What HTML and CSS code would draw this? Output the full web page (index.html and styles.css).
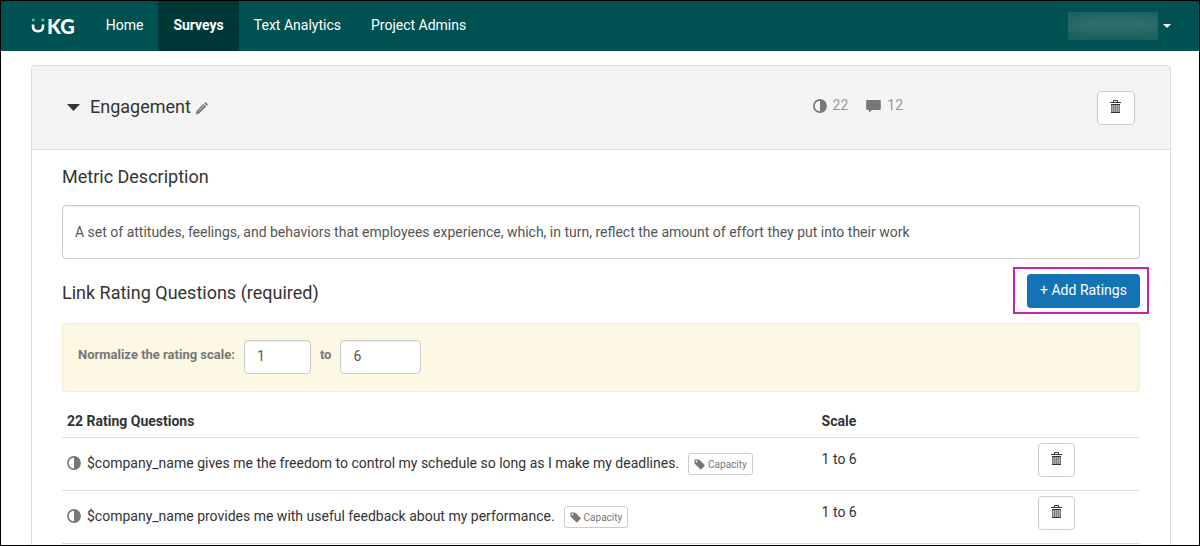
FILE: index.html
```html
<!DOCTYPE html>
<html lang="en">
<head>
<meta charset="utf-8">
<meta name="viewport" content="width=device-width, initial-scale=1">
<title>Surveys</title>
<link rel="stylesheet" href="styles.css">
</head>
<body>
<svg class="sprite" aria-hidden="true">
  <symbol id="contrast" viewBox="0 0 14 14"><circle cx="7" cy="7" r="6.1" fill="none" stroke="currentColor" stroke-width="1.6"/><path d="M7 1a6 6 0 0 1 0 12z" fill="currentColor"/></symbol>
  <symbol id="comment" viewBox="0 0 15 14"><path d="M1.200 1h12.600a1 1 0 0 1 1 1v8a1 1 0 0 1-1 1H6L3 13.800V11H1.200a1 1 0 0 1-1-1V2a1 1 0 0 1 1-1z" fill="currentColor"/></symbol>
  <symbol id="pencil" viewBox="0 0 13 13"><path d="M.5 12.500l1.300-4L8.500 1.900l2.600 2.600-6.700 6.700zM9.200 1.300l.8-.8q.5-.4 1 0l1.600 1.600q.4.500 0 1l-.8.8z" fill="currentColor"/><path d="M3 9.700l6-6" stroke="#f4f4f4" stroke-width=".6"/></symbol>
  <symbol id="trash" viewBox="0 0 13 14"><path d="M4.500 2.500V.5h4v2M1 2.500h11M2 4.500h9M2 12.500h9" fill="none" stroke="#333" stroke-width="1"/><path d="M2 4h9v9H2z" fill="#b3aca4"/><path d="M2.500 4v9M4.500 4v9M6.500 4v9M8.500 4v9M10.500 4v9" stroke="#7b8088" stroke-width="1"/><path d="M2 4.500h9M2 12.500h9" stroke="#333" stroke-width="1"/></symbol>
  <symbol id="tag" viewBox="0 0 11 11"><path fill-rule="evenodd" d="M.5 1q0-.5.500-.5h3.500l2 1.300L10.500 6q.4.500 0 1L7.300 10.200q-.5.400-1 0L.5 4.500zM2.500 1.600a.9.900 0 1 0 0 1.800.9.900 0 0 0 0-1.800z" fill="currentColor"/></symbol>
</svg>
<div class="window">
  <header class="navbar">
    <a class="brand" href="#">
      <svg class="brand-smile" viewBox="0 0 15 16" aria-hidden="true"><path d="M2 6.500v1.800q0 4.900 5 4.900t5-4.900V6.500" fill="none" stroke="#fff" stroke-width="2.600"/><circle cx="2.200" cy="2" r="1.500" fill="#2fcfae"/><circle cx="11.800" cy="2" r="1.500" fill="#2fcfae"/></svg>
      <span class="brand-name">KG</span>
    </a>
    <nav class="nav">
      <a class="nav-link" href="#">Home</a>
      <a class="nav-link active" href="#" aria-current="page">Surveys</a>
      <a class="nav-link" href="#">Text Analytics</a>
      <a class="nav-link" href="#">Project Admins</a>
    </nav>
    <button class="user-menu" type="button" aria-label="Account menu"><span class="user-name"></span><span class="caret"></span></button>
  </header>
  <main class="card">
    <div class="card-header">
      <div class="metric">
        <button class="toggle" type="button" aria-label="Collapse metric"></button>
        <h2 class="title">Engagement</h2>
        <button class="edit" type="button" aria-label="Edit name"><svg class="icon-pencil"><use href="#pencil"/></svg></button>
      </div>
      <div class="stats">
        <span class="stat"><svg class="icon"><use href="#contrast"/></svg><span class="count">22</span></span>
        <span class="stat"><svg class="icon-comment"><use href="#comment"/></svg><span class="count">12</span></span>
      </div>
      <button class="delete" type="button" aria-label="Delete metric"><svg class="icon-trash"><use href="#trash"/></svg></button>
    </div>
    <div class="card-body">
      <h2 class="title"><label for="description">Metric Description</label></h2>
      <textarea class="description" id="description" rows="1">A set of attitudes, feelings, and behaviors that employees experience, which, in turn, reflect the amount of effort they put into their work</textarea>
      <div class="link-row">
        <h2 class="title link-title">Link Rating Questions (required)</h2>
        <button class="add" type="button">+ Add Ratings</button>
      </div>
      <div class="scale-panel">
        <label class="scale-label" for="low">Normalize the rating scale:</label>
        <input class="scale-input" id="low" type="text" value="1">
        <label class="scale-label" for="high">to</label>
        <input class="scale-input wide" id="high" type="text" value="6">
      </div>
      <table class="questions">
        <thead>
          <tr><th class="col-question">22 Rating Questions</th><th class="col-scale">Scale</th><th class="col-action"></th></tr>
        </thead>
        <tbody>
          <tr>
            <td><div class="question"><svg class="icon"><use href="#contrast"/></svg><span class="question-text">$company_name gives me the freedom to control my schedule so long as I make my deadlines.</span><span class="tag"><svg class="icon-tag"><use href="#tag"/></svg>Capacity</span></div></td>
            <td class="scale">1 to 6</td>
            <td class="action"><button class="delete" type="button" aria-label="Delete question"><svg class="icon-trash"><use href="#trash"/></svg></button></td>
          </tr>
          <tr>
            <td><div class="question"><svg class="icon"><use href="#contrast"/></svg><span class="question-text">$company_name provides me with useful feedback about my performance.</span><span class="tag"><svg class="icon-tag"><use href="#tag"/></svg>Capacity</span></div></td>
            <td class="scale">1 to 6</td>
            <td class="action"><button class="delete" type="button" aria-label="Delete question"><svg class="icon-trash"><use href="#trash"/></svg></button></td>
          </tr>
        </tbody>
      </table>
    </div>
  </main>
</div>
</body>
</html>
```
FILE: styles.css
```css
* { box-sizing: border-box; }
body { margin: 0; background: #fff; color: #333; font: 14px/20px Roboto, sans-serif; }
button, input, textarea { font: inherit; }
button { cursor: pointer; }
svg { display: block; flex: none; }
.sprite { position: absolute; width: 0; height: 0; }

.window { display: flex; flex-direction: column; min-height: 100vh; border: 1px solid #000; }

.navbar { display: flex; align-items: stretch; min-height: 50px; padding: 0 28px 0 30px; background: #005151; }
.brand { display: flex; align-items: center; margin-right: 15px; color: #fff; text-decoration: none; }
.brand-smile { width: 15px; height: 16px; }
.brand-name { padding: 0 1px; font: 900 20px/20px Lato, sans-serif; }
.nav { display: flex; flex: 1; }
.nav-link { padding: 14px 15px 16px; color: #fff; text-decoration: none; }
.nav-link.active { background: #003737; font-weight: 700; }
.user-menu { display: flex; align-items: center; gap: 5px; padding: 0; border: 0; background: none; }
.user-name { width: 90px; height: 28px; background: radial-gradient(ellipse at 30% 45%, #2f706f, transparent 60%), radial-gradient(ellipse at 80% 45%, #2f706f, transparent 60%), #1b605f; }
.caret { border: 4px solid transparent; border-top-color: #fff; border-bottom: 0; }

.card { flex: 1; margin: 14px 28px 0 30px; border: 1px solid #ddd; border-bottom: 0; border-radius: 4px 4px 0 0; }
.card-header { display: grid; grid-template-columns: 70% 20% 10%; align-items: center; min-height: 84px; padding: 0 35px; border-bottom: 1px solid #ddd; background: #f4f4f4; border-radius: 3px 3px 0 0; }
.card-header .delete { justify-self: end; }
.metric { display: flex; align-items: center; padding-bottom: 2px; }
.toggle { width: 13px; height: 7px; margin: 2px 10px 0 0; padding: 0; border: 0; background: #333; clip-path: polygon(0 0, 100% 0, 50% 100%); }
.title { margin: 0; font-size: 18px; line-height: 20px; font-weight: 400; }
.edit { margin: 3px 0 0 4px; padding: 0; border: 0; background: none; color: #777; }
.icon-pencil { width: 13px; height: 13px; }
.stats { display: flex; gap: 18px; margin-left: -2px; padding-bottom: 6px; color: #999; }
.stat { display: flex; align-items: center; gap: 6px; }
.icon, .icon-comment { width: 14px; height: 14px; color: #777; }
.icon-comment { width: 15px; }
.stat svg { margin-top: 3px; }

.delete { display: flex; justify-content: center; width: 38px; height: 34px; padding: 8px 0; border: 1px solid #ccc; border-radius: 4px; background: #fff; }
.icon-trash { width: 13px; height: 14px; }

.card-body { padding: 17px 30px 0; }
.description { display: block; width: 100%; height: 54px; margin-top: 18px; padding: 16px 12px; border: 1px solid #ccc; border-radius: 4px; box-shadow: inset 0 1px 1px rgba(0, 0, 0, .08); color: #555; resize: none; overflow: hidden; }
.link-row { display: flex; align-items: flex-end; justify-content: space-between; margin-top: 15px; }
.link-title { line-height: 30px; }
.add { position: relative; height: 34px; padding: 0 12px 2px; border: 0; border-radius: 4px; background: #1473b5; color: #fff; min-width: 113px; }
.add::after { content: ""; position: absolute; inset: -7px -9px -6px -14px; border: 2px solid #c724b1; pointer-events: none; }

.scale-panel { display: flex; align-items: center; gap: 9px; margin-top: 15px; padding: 16px 15px 17px; border: 1px solid #faebcc; border-radius: 4px; background: #fcf8e3; }
.scale-label { padding-bottom: 4px; color: #777; font-size: 13px; font-weight: 700; }
.scale-input { width: 67px; height: 34px; padding: 5px 12px 7px; border: 1px solid #ccc; border-radius: 4px; background: #fff; box-shadow: inset 0 1px 1px rgba(0, 0, 0, .08); color: #555; }
.scale-input.wide { width: 81px; }

.questions { width: 100%; margin-top: 14px; border-spacing: 0; table-layout: fixed; }
.questions th { padding: 5px 5px 6px; border-bottom: 1px solid #ddd; text-align: left; font-weight: 700; }
.questions td { padding: 5px; border-bottom: 1px solid #ddd; }
.col-question { width: 70%; }
.col-scale { width: 20%; }
.questions .scale { padding-top: 11px; vertical-align: top; }
.questions .action { padding-bottom: 13px; vertical-align: top; }
.action .delete { width: 37px; margin-left: 1px; }
.question { display: flex; align-items: center; }
.question .icon { margin-bottom: 3px; }
.question-text { margin: 0 9px 2px 6px; }
.tag { display: flex; align-items: center; gap: 3px; height: 22px; padding: 1px 5px 0; border: 1px solid #ccc; border-radius: 3px; color: #777; font-size: 10px; line-height: 20px; }
.icon-tag { width: 11px; height: 11px; }
```
